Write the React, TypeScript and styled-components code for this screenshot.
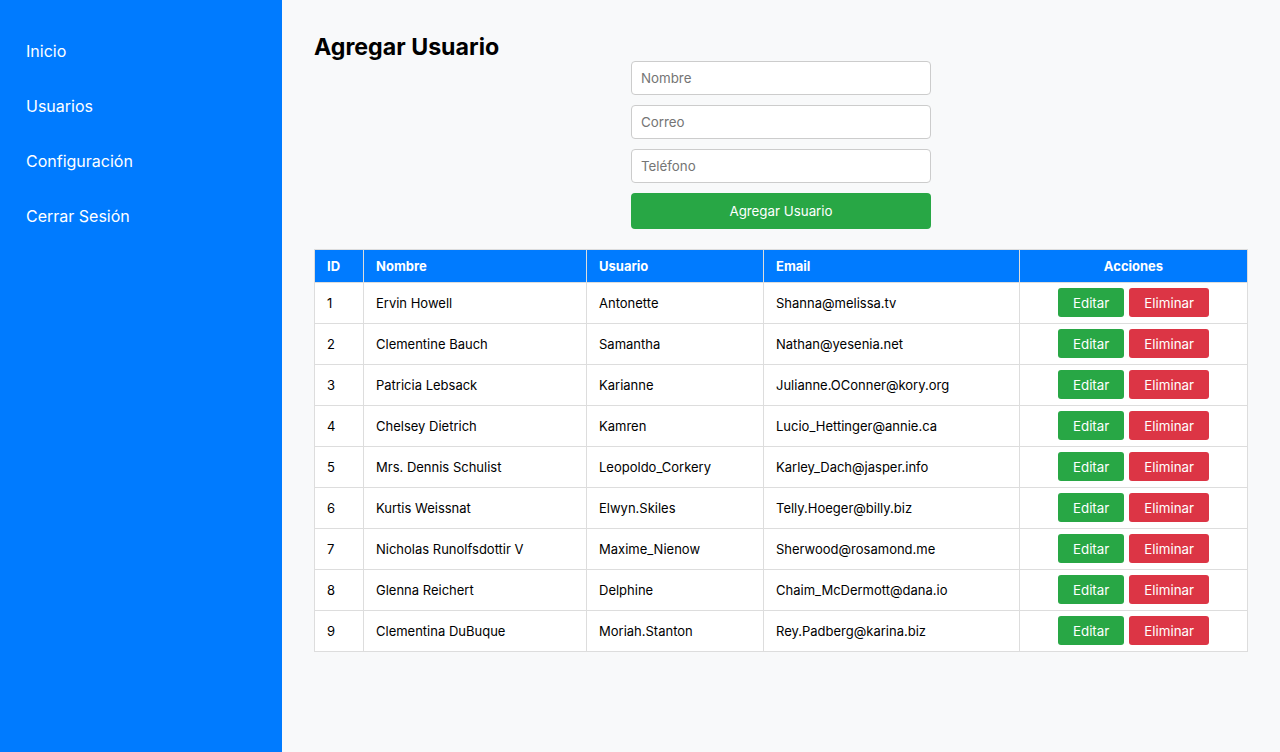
import React from "react";
import styled, { createGlobalStyle } from "styled-components";

const Global = createGlobalStyle`
  html, body { margin: 0; padding: 0; }
  body { font-family: Inter, "Noto Sans", Arial, sans-serif; background: #f8f9fa; color: #000; }
  * { box-sizing: border-box; }
`;

const Layout = styled.div`
  display: flex;
  min-height: 752px;
`;

const Sidebar = styled.nav`
  width: 282px;
  flex-shrink: 0;
  background: #007bff;
  padding: 24px 26px;
  display: flex;
  flex-direction: column;
`;

const NavLink = styled.a`
  color: #fff;
  font-size: 16px;
  line-height: 55px;
  height: 55px;
  text-decoration: none;
  cursor: pointer;
`;

const Main = styled.main`
  flex: 1;
  padding: 32px 32px;
  background: #f8f9fa;
`;

const Header = styled.div`
  display: grid;
  grid-template-columns: 1fr 300px 1fr;
  align-items: start;
`;

const Title = styled.h2`
  margin: 0;
  font-size: 23.2px;
  line-height: 31px;
  font-weight: 700;
  white-space: nowrap;
`;

const Form = styled.form`
  margin-top: 29px;
  display: flex;
  flex-direction: column;
  gap: 10px;
`;

const Input = styled.input`
  width: 300px;
  height: 34px;
  padding: 0 9px;
  border: 1px solid #ccc;
  border-radius: 4px;
  font-family: inherit;
  font-size: 13.333px;
  color: #212529;
  background: #fff;
  &::placeholder { color: #757575; }
`;

const SubmitButton = styled.button`
  height: 36px;
  border: none;
  border-radius: 4px;
  background: #28a745;
  color: #fff;
  font-family: inherit;
  font-size: 13.333px;
  cursor: pointer;
`;

const Table = styled.table`
  margin-top: 20px;
  width: 100%;
  border-collapse: collapse;
  border: 1px solid #ddd;
  background: #fff;
  font-size: 13px;
`;

const Th = styled.th<{ $center?: boolean; $w?: number }>`
  background: #007bff;
  color: #fff;
  font-weight: 700;
  text-align: ${(p) => (p.$center ? "center" : "left")};
  height: 33px;
  padding: 0 12px;
  border: 1px solid #ddd;
  ${(p) => (p.$w ? `width: ${p.$w}px;` : "")}
`;

const Td = styled.td<{ $center?: boolean }>`
  height: 41px;
  padding: 0 12px;
  border: 1px solid #ddd;
  color: #000;
  text-align: ${(p) => (p.$center ? "center" : "left")};
`;

const Actions = styled.div`
  display: flex;
  justify-content: center;
  gap: 5px;
  margin-top: -1px;
`;

const ActionButton = styled.button<{ $variant: "edit" | "delete" }>`
  height: 29px;
  padding: 0 15px;
  border: none;
  border-radius: 3px;
  font-family: inherit;
  font-size: 13.333px;
  color: #fff;
  background: ${(p) => (p.$variant === "edit" ? "#28a745" : "#dc3545")};
  cursor: pointer;
`;

const users = [
  [1, "Ervin Howell", "Antonette", "Shanna@melissa.tv"],
  [2, "Clementine Bauch", "Samantha", "Nathan@yesenia.net"],
  [3, "Patricia Lebsack", "Karianne", "Julianne.OConner@kory.org"],
  [4, "Chelsey Dietrich", "Kamren", "Lucio_Hettinger@annie.ca"],
  [5, "Mrs. Dennis Schulist", "Leopoldo_Corkery", "Karley_Dach@jasper.info"],
  [6, "Kurtis Weissnat", "Elwyn.Skiles", "Telly.Hoeger@billy.biz"],
  [7, "Nicholas Runolfsdottir V", "Maxime_Nienow", "Sherwood@rosamond.me"],
  [8, "Glenna Reichert", "Delphine", "Chaim_McDermott@dana.io"],
  [9, "Clementina DuBuque", "Moriah.Stanton", "Rey.Padberg@karina.biz"],
] as const;

export default function App() {
  return (
    <>
      <Global />
      <Layout>
        <Sidebar>
          <NavLink>Inicio</NavLink>
          <NavLink>Usuarios</NavLink>
          <NavLink>Configuración</NavLink>
          <NavLink>Cerrar Sesión</NavLink>
        </Sidebar>
        <Main>
          <Header>
            <Title>Agregar Usuario</Title>
            <Form onSubmit={(e) => e.preventDefault()}>
              <Input placeholder="Nombre" />
              <Input placeholder="Correo" />
              <Input placeholder="Teléfono" />
              <SubmitButton type="submit">Agregar Usuario</SubmitButton>
            </Form>
            <div />
          </Header>
          <Table>
            <thead>
              <tr>
                <Th $w={49}>ID</Th>
                <Th $w={223}>Nombre</Th>
                <Th $w={177}>Usuario</Th>
                <Th $w={256}>Email</Th>
                <Th $center>Acciones</Th>
              </tr>
            </thead>
            <tbody>
              {users.map(([id, name, user, email]) => (
                <tr key={id}>
                  <Td>{id}</Td>
                  <Td>{name}</Td>
                  <Td>{user}</Td>
                  <Td>{email}</Td>
                  <Td $center>
                    <Actions>
                      <ActionButton $variant="edit">Editar</ActionButton>
                      <ActionButton $variant="delete">Eliminar</ActionButton>
                    </Actions>
                  </Td>
                </tr>
              ))}
            </tbody>
          </Table>
        </Main>
      </Layout>
    </>
  );
}
